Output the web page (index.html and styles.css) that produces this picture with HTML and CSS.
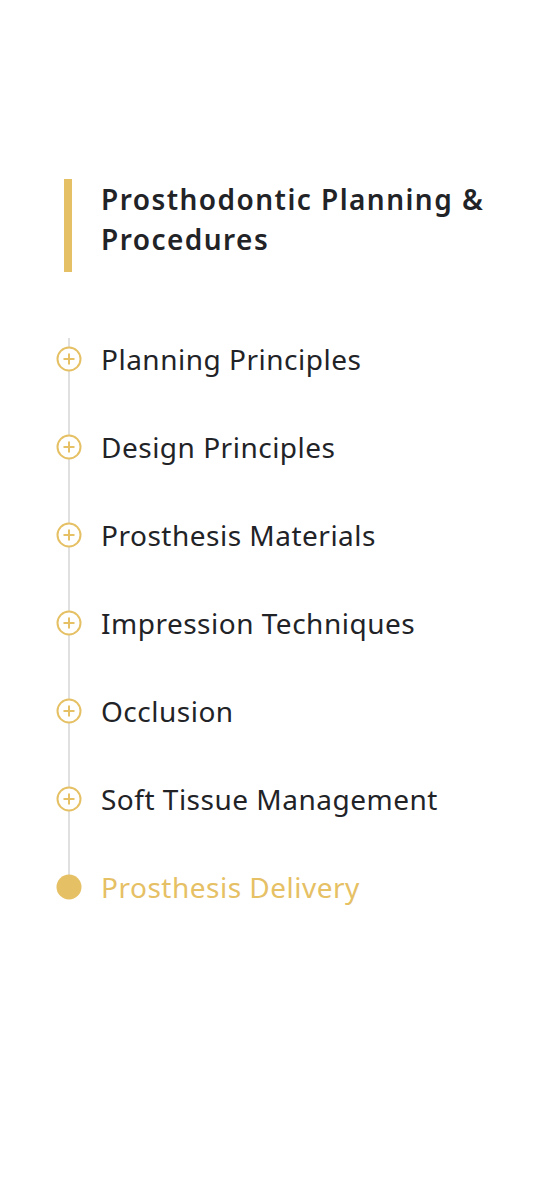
FILE: index.html
```html
<!DOCTYPE html>
<html>
<head>
<meta charset="utf-8">
<link rel="stylesheet" href="styles.css">
</head>
<body>
<div class="page">
  <div class="header">
    <div class="bar"></div>
    <h1 class="title">Prosthodontic Planning &amp; Procedures</h1>
  </div>
  <ul class="timeline">
    <li class="item"><span class="icon"><svg width="26" height="26" viewBox="0 0 26 26"><circle cx="13" cy="13" r="11.5" fill="#fff" stroke="#e6c064" stroke-width="2"/><path d="M13 7.5v11M7.5 13h11" stroke="#e6c064" stroke-width="2"/></svg></span><span class="label">Planning Principles</span></li>
    <li class="item"><span class="icon"><svg width="26" height="26" viewBox="0 0 26 26"><circle cx="13" cy="13" r="11.5" fill="#fff" stroke="#e6c064" stroke-width="2"/><path d="M13 7.5v11M7.5 13h11" stroke="#e6c064" stroke-width="2"/></svg></span><span class="label">Design Principles</span></li>
    <li class="item"><span class="icon"><svg width="26" height="26" viewBox="0 0 26 26"><circle cx="13" cy="13" r="11.5" fill="#fff" stroke="#e6c064" stroke-width="2"/><path d="M13 7.5v11M7.5 13h11" stroke="#e6c064" stroke-width="2"/></svg></span><span class="label">Prosthesis Materials</span></li>
    <li class="item"><span class="icon"><svg width="26" height="26" viewBox="0 0 26 26"><circle cx="13" cy="13" r="11.5" fill="#fff" stroke="#e6c064" stroke-width="2"/><path d="M13 7.5v11M7.5 13h11" stroke="#e6c064" stroke-width="2"/></svg></span><span class="label">Impression Techniques</span></li>
    <li class="item"><span class="icon"><svg width="26" height="26" viewBox="0 0 26 26"><circle cx="13" cy="13" r="11.5" fill="#fff" stroke="#e6c064" stroke-width="2"/><path d="M13 7.5v11M7.5 13h11" stroke="#e6c064" stroke-width="2"/></svg></span><span class="label">Occlusion</span></li>
    <li class="item"><span class="icon"><svg width="26" height="26" viewBox="0 0 26 26"><circle cx="13" cy="13" r="11.5" fill="#fff" stroke="#e6c064" stroke-width="2"/><path d="M13 7.5v11M7.5 13h11" stroke="#e6c064" stroke-width="2"/></svg></span><span class="label">Soft Tissue Management</span></li>
    <li class="item active"><span class="icon"><svg width="26" height="26" viewBox="0 0 26 26"><circle cx="13" cy="13" r="12.5" fill="#e6c064"/></svg></span><span class="label">Prosthesis Delivery</span></li>
  </ul>
</div>
</body>
</html>
```
FILE: styles.css
```css
html, body {
  margin: 0;
  padding: 0;
  background: #fff;
}
body {
  font-family: "Noto Sans", "Open Sans", sans-serif;
  color: #222327;
}
.page {
  padding: 179px 0 0 64px;
}
.header {
  display: flex;
  gap: 29px;
  align-items: stretch;
}
.bar {
  width: 8px;
  flex: none;
  background: #e6c064;
}
.title {
  margin: 0;
  padding: 0 0 13px 0;
  font-size: 28px;
  font-weight: 600;
  line-height: 40px;
  letter-spacing: 1.45px;
  width: 440px;
}
.timeline {
  list-style: none;
  margin: 43px 0 0 0;
  padding: 0;
  position: relative;
}
.timeline::before {
  content: "";
  position: absolute;
  left: 4px;
  top: 23px;
  width: 2px;
  height: 537px;
  background: #e0e0e0;
}
.item {
  display: flex;
  align-items: center;
  height: 88px;
  margin-left: -8px;
  gap: 19px;
  position: relative;
}
.icon {
  width: 26px;
  height: 26px;
  display: flex;
}
.label {
  font-size: 28px;
  letter-spacing: 0.5px;
}
.active .label {
  color: #e6c064;
}
```
